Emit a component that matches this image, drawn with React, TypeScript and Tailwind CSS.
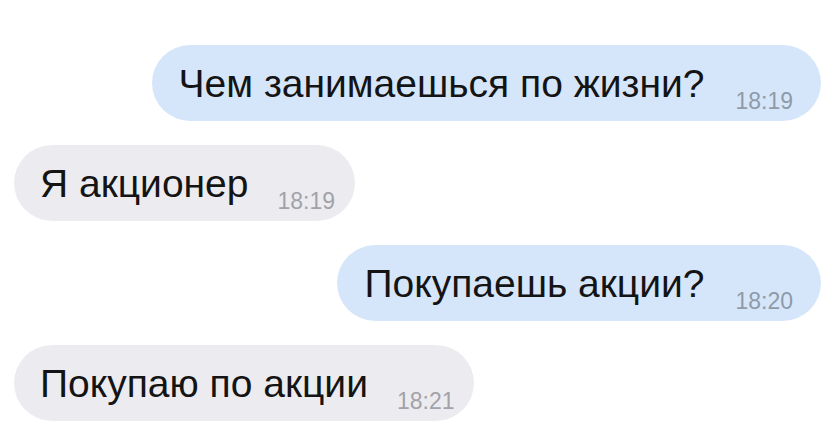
import React from "react";

type Msg = { text: string; time: string; out: boolean };

const msgs: Msg[] = [
  { text: "Чем занимаешься по жизни?", time: "18:19", out: true },
  { text: "Я акционер", time: "18:19", out: false },
  { text: "Покупаешь акции?", time: "18:20", out: true },
  { text: "Покупаю по акции", time: "18:21", out: false },
];

function Bubble({ m }: { m: Msg }) {
  return (
    <div
      className={
        m.out
          ? "flex h-[76px] items-center rounded-full bg-[#d6e6fa] pl-[27px] pr-[28px]"
          : "flex h-[76px] items-center rounded-full bg-[#ececf0] pl-[26px] pr-[20px]"
      }
    >
      <span className="text-[39px] leading-none text-[#141414]">{m.text}</span>
      <span
        className={
          m.out
            ? "ml-[31px] mb-[8px] self-end text-[23px] leading-none text-[#8f9aa8]"
            : "ml-[29px] mb-[8px] self-end text-[23px] leading-none text-[#a2a2a8]"
        }
      >
        {m.time}
      </span>
    </div>
  );
}

export default function App() {
  return (
    <div
      className="flex h-[430px] w-[828px] flex-col gap-[24px] overflow-hidden bg-white pl-[14px] pr-[7px] pt-[45px]"
      style={{ fontFamily: '"Liberation Sans", Arial, sans-serif' }}
    >
      {msgs.map((m, i) => (
        <div key={i} className={m.out ? "flex justify-end" : "flex justify-start"}>
          <Bubble m={m} />
        </div>
      ))}
    </div>
  );
}
